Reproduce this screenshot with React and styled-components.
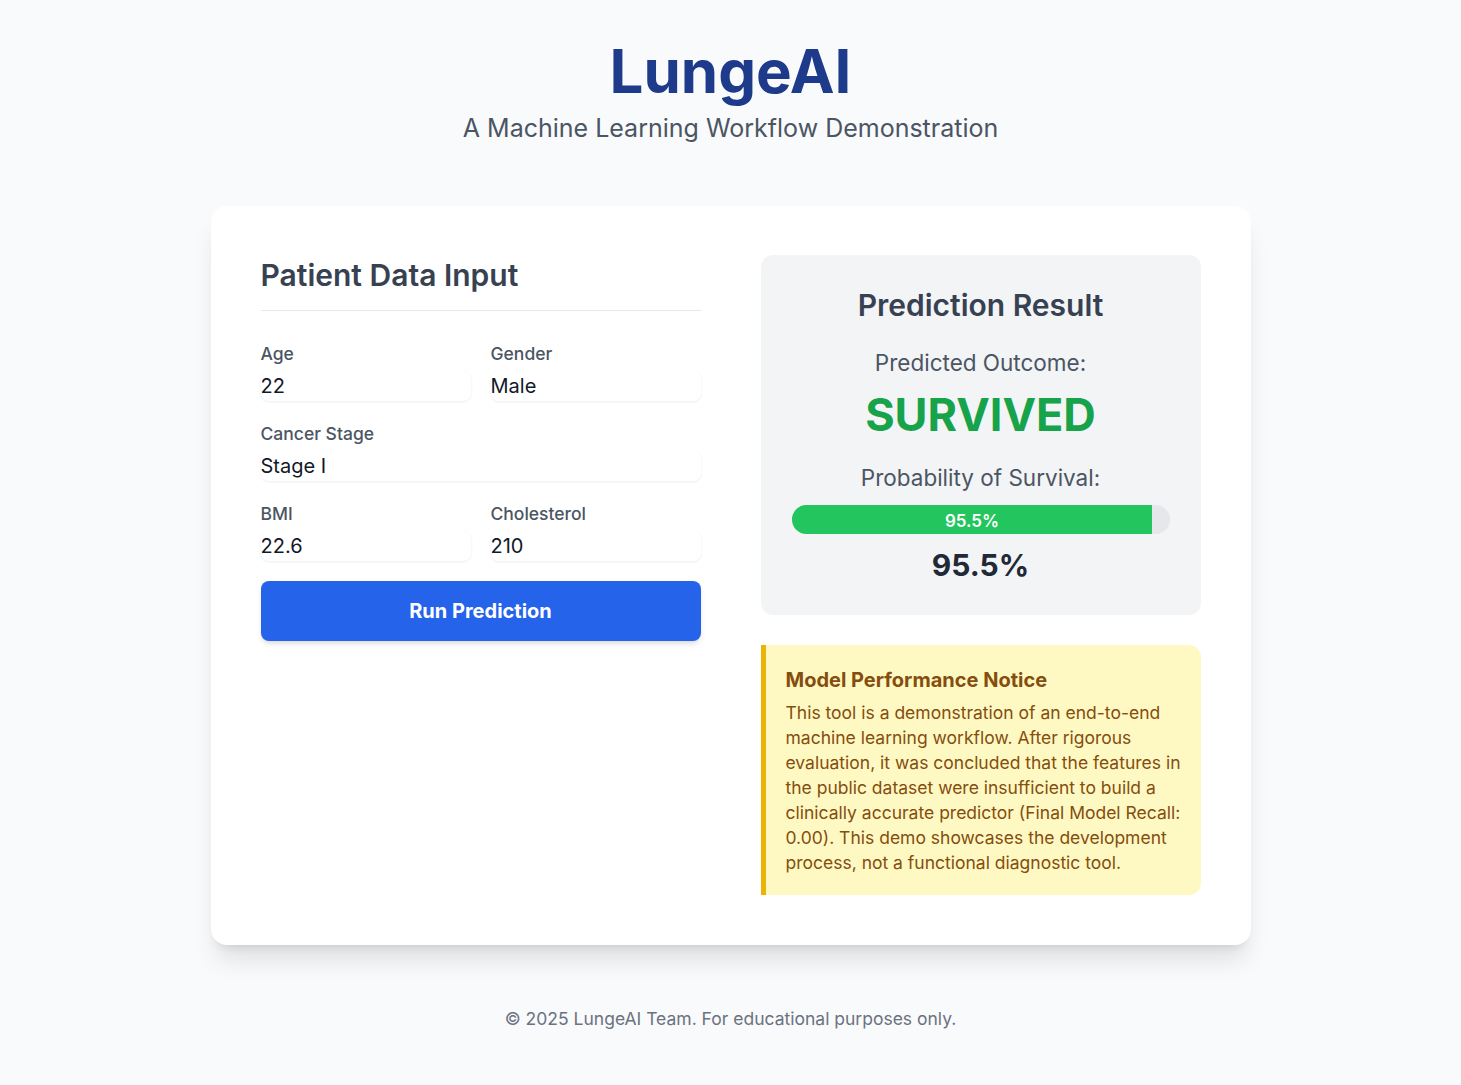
import React from 'react';
import styled, { createGlobalStyle } from 'styled-components';

const GlobalStyle = createGlobalStyle`
  * { box-sizing: border-box; }
  body {
    margin: 0;
    background: #f9fafb;
    font-family: Inter, 'Noto Sans', sans-serif;
    color: #111827;
  }
`;

const Page = styled.div`
  padding: 41px 0 55px;
  display: flex;
  flex-direction: column;
  align-items: center;
`;

const Header = styled.header`
  text-align: center;
  margin-bottom: 62px;
`;

const Title = styled.h1`
  margin: 0;
  font-size: 60px;
  line-height: 60px;
  font-weight: 700;
  color: #1e3a8a;
`;

const Subtitle = styled.p`
  margin: 11px 0 0;
  font-size: 25px;
  line-height: 32px;
  color: #4b5563;
`;

const Card = styled.main`
  width: 1040px;
  background: #fff;
  border-radius: 16px;
  padding: 49px 50px 50px;
  box-shadow: 0 20px 25px -5px rgba(0, 0, 0, 0.1), 0 8px 10px -6px rgba(0, 0, 0, 0.1);
  display: grid;
  grid-template-columns: 440px 440px;
  column-gap: 60px;
  align-items: start;
`;

const SectionTitle = styled.h2`
  margin: 2px 0 31px;
  padding-bottom: 17px;
  border-bottom: 1px solid #e5e7eb;
  font-size: 30px;
  line-height: 36px;
  font-weight: 600;
  color: #374151;
`;

const FormGrid = styled.div`
  display: grid;
  grid-template-columns: 1fr 1fr;
  row-gap: 21px;
  column-gap: 20px;
`;

const Field = styled.label`
  display: flex;
  flex-direction: column;
  gap: 5px;
  grid-column: ${({ wide }) => (wide ? 'span 2' : 'auto')};
`;

const Label = styled.span`
  font-size: 17.5px;
  line-height: 24px;
  font-weight: 500;
  color: #4b5563;
`;

const Input = styled.input`
  height: 30px;
  width: 100%;
  border: none;
  outline: none;
  padding: 0;
  border-radius: 8px;
  background: #fff;
  box-shadow: 0 1px 3px rgba(0, 0, 0, 0.07);
  font-family: inherit;
  font-size: 20px;
  color: #111827;
`;

const RunButton = styled.button`
  display: block;
  width: 100%;
  margin-top: 20px;
  height: 60px;
  border: none;
  border-radius: 8px;
  background: #2563eb;
  color: #fff;
  font-family: inherit;
  font-size: 20px;
  font-weight: 700;
  box-shadow: 0 4px 6px -1px rgba(0, 0, 0, 0.1), 0 2px 4px -2px rgba(0, 0, 0, 0.1);
  cursor: pointer;
`;

const Side = styled.div`
  display: flex;
  flex-direction: column;
  gap: 30px;
`;

const ResultPanel = styled.section`
  background: #f3f4f6;
  border-radius: 12px;
  padding: 32px 31px 32px;
  display: flex;
  flex-direction: column;
  align-items: center;
  text-align: center;
`;

const ResultTitle = styled.h2`
  margin: 0 0 25px;
  font-size: 30px;
  line-height: 36px;
  font-weight: 600;
  color: #374151;
`;

const ResultLabel = styled.p`
  margin: 0;
  font-size: 22.5px;
  line-height: 30px;
  color: #4b5563;
`;

const Outcome = styled.div`
  margin: 14px 0 25px;
  font-size: 45px;
  line-height: 46px;
  font-weight: 700;
  color: #16a34a;
`;

const Track = styled.div`
  margin-top: 12px;
  width: 100%;
  height: 29px;
  border-radius: 999px;
  background: #e5e7eb;
  overflow: hidden;
  display: flex;
`;

const Fill = styled.div`
  height: 100%;
  background: #22c55e;
  color: #fff;
  font-size: 17px;
  font-weight: 600;
  display: flex;
  align-items: center;
  justify-content: center;
  padding-top: 2px;
`;

const Percent = styled.div`
  margin-top: 13px;
  font-size: 30px;
  line-height: 36px;
  font-weight: 700;
  color: #1f2937;
`;

const Notice = styled.aside`
  background: #fef9c3;
  border-left: 5px solid #eab308;
  border-radius: 0 12px 12px 0;
  padding: 21px 15px 20px 20px;
  color: #854d0e;
`;

const NoticeTitle = styled.h3`
  margin: 0 0 6px;
  font-size: 20px;
  line-height: 28px;
  font-weight: 700;
`;

const NoticeText = styled.p`
  margin: 0;
  font-size: 17.5px;
  line-height: 25px;
`;

const Footer = styled.footer`
  margin-top: 62px;
  font-size: 17.5px;
  line-height: 24px;
  color: #6b7280;
`;

const probability = 95.5;

export default function App() {
  return (
    <>
      <GlobalStyle />
      <Page>
        <Header>
          <Title>LungeAI</Title>
          <Subtitle>A Machine Learning Workflow Demonstration</Subtitle>
        </Header>
        <Card>
          <div>
            <SectionTitle>Patient Data Input</SectionTitle>
            <FormGrid>
              <Field>
                <Label>Age</Label>
                <Input defaultValue="22" />
              </Field>
              <Field>
                <Label>Gender</Label>
                <Input defaultValue="Male" />
              </Field>
              <Field wide>
                <Label>Cancer Stage</Label>
                <Input defaultValue="Stage I" />
              </Field>
              <Field>
                <Label>BMI</Label>
                <Input defaultValue="22.6" />
              </Field>
              <Field>
                <Label>Cholesterol</Label>
                <Input defaultValue="210" />
              </Field>
            </FormGrid>
            <RunButton>Run Prediction</RunButton>
          </div>
          <Side>
            <ResultPanel>
              <ResultTitle>Prediction Result</ResultTitle>
              <ResultLabel>Predicted Outcome:</ResultLabel>
              <Outcome>SURVIVED</Outcome>
              <ResultLabel>Probability of Survival:</ResultLabel>
              <Track>
                <Fill style={{ width: `${probability}%` }}>{probability}%</Fill>
              </Track>
              <Percent>{probability}%</Percent>
            </ResultPanel>
            <Notice>
              <NoticeTitle>Model Performance Notice</NoticeTitle>
              <NoticeText>
                This tool is a demonstration of an end-to-end machine learning workflow. After
                rigorous evaluation, it was concluded that the features in the public dataset were
                insufficient to build a clinically accurate predictor (Final Model Recall: 0.00).
                This demo showcases the development process, not a functional diagnostic tool.
              </NoticeText>
            </Notice>
          </Side>
        </Card>
        <Footer>© 2025 LungeAI Team. For educational purposes only.</Footer>
      </Page>
    </>
  );
}
